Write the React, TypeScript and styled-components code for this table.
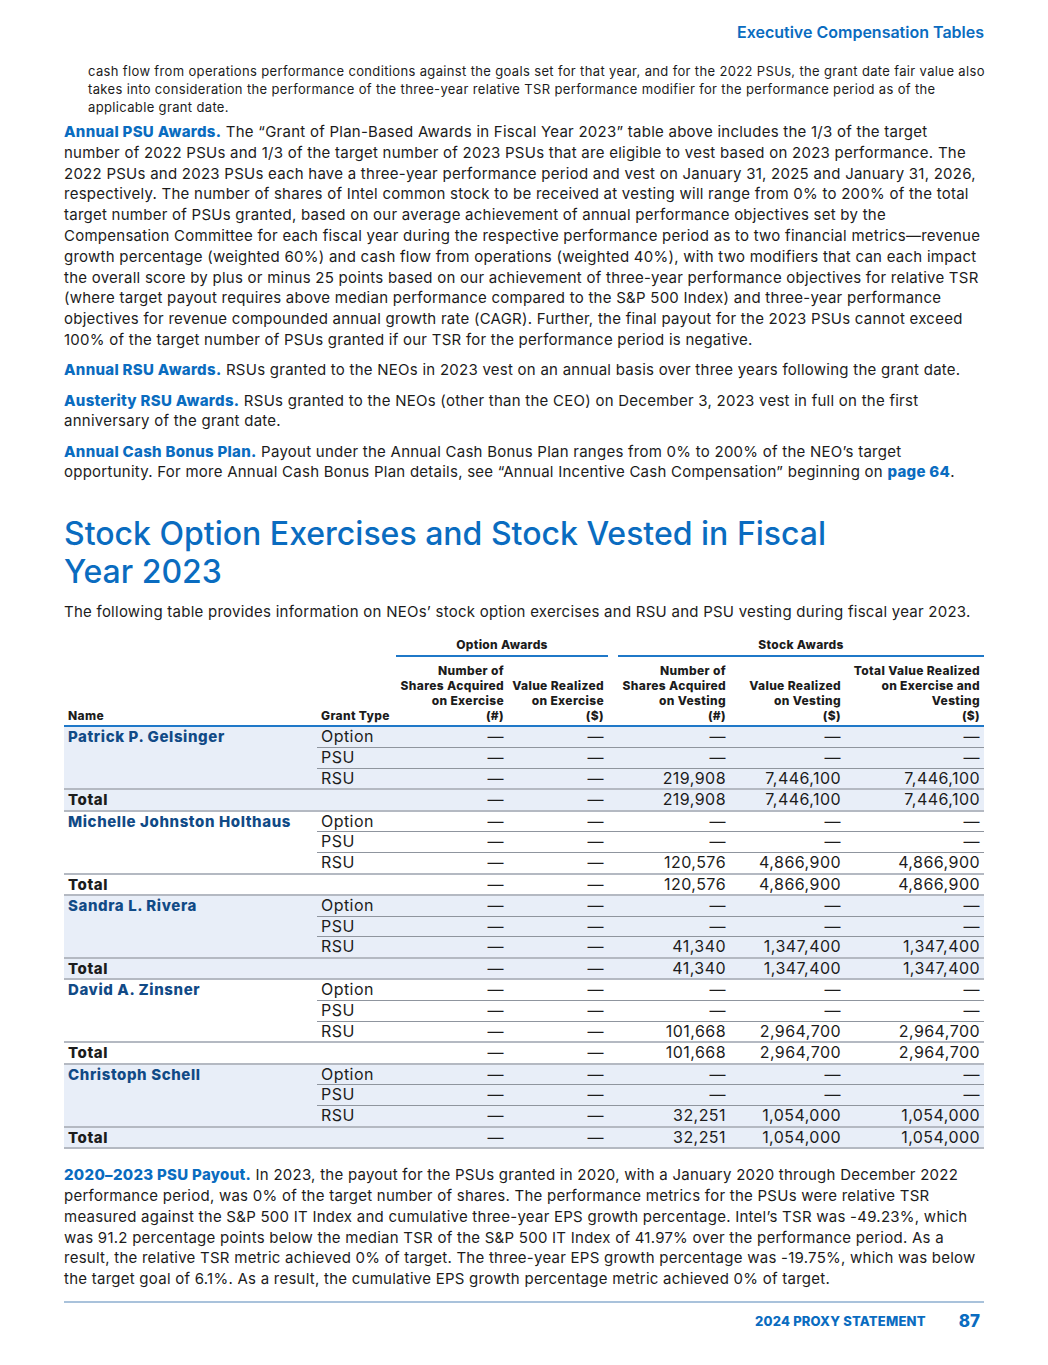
import React from "react";
import styled, { createGlobalStyle } from "styled-components";

const GlobalStyle = createGlobalStyle`
  html, body { margin: 0; padding: 0; background: #ffffff; }
  body { font-family: Inter, "Open Sans", "Liberation Sans", sans-serif; color: #1c1c1c; }
`;

const Page = styled.div`
  width: 1048px;
  height: 1365px;
  box-sizing: border-box;
  padding: 0 64px;
  display: flex;
  flex-direction: column;
`;

const RunningHead = styled.div`
  padding-top: 22px;
  height: 20px;
  line-height: 20px;
  text-align: right;
  font-size: 16px;
  font-weight: 600;
  color: #0a6cc0;
`;

const Para = styled.div<{ $mt: number; $small?: boolean; $indent?: number }>`
  margin-top: ${(p) => p.$mt}px;
  padding-left: ${(p) => p.$indent ?? 0}px;
  font-size: ${(p) => (p.$small ? 13 : 15)}px;
  line-height: ${(p) => (p.$small ? 18 : 20.8)}px;
  letter-spacing: ${(p) => (p.$small ? "0.35px" : "0.25px")};
  white-space: nowrap;
`;

const Line = styled.span`
  display: block;
`;

const Label = styled.span`
  font-weight: 800;
  letter-spacing: 0.3px;
  color: #0a6cc0;
`;

const Title = styled.h1`
  margin: 32px 0 0;
  font-size: 32px;
  line-height: 38px;
  font-weight: 500;
  color: #0a6cc0;
  letter-spacing: 0px;
`;

const Table = styled.table`
  margin-top: 10px;
  width: 920px;
  border-collapse: collapse;
  table-layout: fixed;
`;

const GroupHead = styled.th`
  padding: 0;
  vertical-align: bottom;
`;

const GroupLabel = styled.div<{ $offset?: number }>`
  margin-left: ${(p) => p.$offset ?? 0}px;
  padding: 4px 0 3px;
  border-bottom: 2px solid #1f78c8;
  font-size: 12px;
  line-height: 15px;
  font-weight: 800;
  letter-spacing: 0.3px;
  text-align: center;
  color: #1c1c1c;
`;

const ColHead = styled.th<{ $left?: boolean }>`
  padding: 6px 4px 2px;
  vertical-align: bottom;
  font-size: 12px;
  line-height: 15.2px;
  font-weight: 800;
  letter-spacing: 0.35px;
  text-align: ${(p) => (p.$left ? "left" : "right")};
  border-bottom: 2px solid #1f78c8;
  color: #1c1c1c;
  white-space: nowrap;
`;

const Row = styled.tr<{ $shaded: boolean }>`
  background: ${(p) => (p.$shaded ? "#e8eef8" : "#ffffff")};
`;

const Cell = styled.td<{ $left?: boolean; $edge?: "thin" | "thick" }>`
  padding: 0 4px;
  height: 19.6px;
  font-size: 16px;
  line-height: 19.6px;
  letter-spacing: 0.45px;
  text-align: ${(p) => (p.$left ? "left" : "right")};
  white-space: nowrap;
  border-bottom: ${(p) =>
    p.$edge === "thick" ? "2px solid #b4b9c2" : "1px solid #8f959e"};
`;

const NameCell = styled.td`
  padding: 0 4px;
  vertical-align: top;
  font-size: 15px;
  line-height: 19.6px;
  font-weight: 800;
  letter-spacing: 0.6px;
  white-space: nowrap;
  color: #114a86;
  border-bottom: 2px solid #b4b9c2;
`;

const TotalCell = styled.td<{ $left?: boolean }>`
  padding: 0 4px;
  height: 19.6px;
  font-size: ${(p) => (p.$left ? 15 : 16)}px;
  line-height: 19.6px;
  letter-spacing: ${(p) => (p.$left ? "0.6px" : "0.45px")};
  font-weight: ${(p) => (p.$left ? 800 : 400)};
  text-align: ${(p) => (p.$left ? "left" : "right")};
  border-bottom: 2px solid #b4b9c2;
`;

const Footer = styled.div`
  margin-top: 11px;
  border-top: 2px solid #a9c2db;
  display: flex;
  justify-content: flex-end;
  align-items: center;
  gap: 33px;
  padding: 8px 4px 0 0;
  color: #0a6cc0;
  font-weight: 800;
`;

const FooterTitle = styled.span`
  font-size: 13px;
  letter-spacing: 0.2px;
`;

const PageNum = styled.span`
  font-size: 17px;
`;

type Person = { name: string; shares: string; value: string };

const people: Person[] = [
  { name: "Patrick P. Gelsinger", shares: "219,908", value: "7,446,100" },
  { name: "Michelle Johnston Holthaus", shares: "120,576", value: "4,866,900" },
  { name: "Sandra L. Rivera", shares: "41,340", value: "1,347,400" },
  { name: "David A. Zinsner", shares: "101,668", value: "2,964,700" },
  { name: "Christoph Schell", shares: "32,251", value: "1,054,000" },
];

const D = "\u2014";

function PersonRows({ p, shaded }: { p: Person; shaded: boolean }) {
  return (
    <>
      <Row $shaded={shaded}>
        <NameCell rowSpan={3}>{p.name}</NameCell>
        <Cell $left>Option</Cell>
        <Cell>{D}</Cell>
        <Cell>{D}</Cell>
        <Cell>{D}</Cell>
        <Cell>{D}</Cell>
        <Cell>{D}</Cell>
      </Row>
      <Row $shaded={shaded}>
        <Cell $left>PSU</Cell>
        <Cell>{D}</Cell>
        <Cell>{D}</Cell>
        <Cell>{D}</Cell>
        <Cell>{D}</Cell>
        <Cell>{D}</Cell>
      </Row>
      <Row $shaded={shaded}>
        <Cell $left $edge="thick">RSU</Cell>
        <Cell $edge="thick">{D}</Cell>
        <Cell $edge="thick">{D}</Cell>
        <Cell $edge="thick">{p.shares}</Cell>
        <Cell $edge="thick">{p.value}</Cell>
        <Cell $edge="thick">{p.value}</Cell>
      </Row>
      <Row $shaded={shaded}>
        <TotalCell $left colSpan={2}>Total</TotalCell>
        <TotalCell>{D}</TotalCell>
        <TotalCell>{D}</TotalCell>
        <TotalCell>{p.shares}</TotalCell>
        <TotalCell>{p.value}</TotalCell>
        <TotalCell>{p.value}</TotalCell>
      </Row>
    </>
  );
}

export default function App() {
  return (
    <>
      <GlobalStyle />
      <Page>
        <RunningHead>Executive Compensation Tables</RunningHead>

        <Para $mt={20} $small $indent={24}>
          <Line>cash flow from operations performance conditions against the goals set for that year, and for the 2022 PSUs, the grant date fair value also</Line>
          <Line>takes into consideration the performance of the three-year relative TSR performance modifier for the performance period as of the</Line>
          <Line>applicable grant date.</Line>
        </Para>

        <Para $mt={6}>
          <Line><Label>Annual PSU Awards.</Label> The “Grant of Plan-Based Awards in Fiscal Year 2023” table above includes the 1/3 of the target</Line>
          <Line>number of 2022 PSUs and 1/3 of the target number of 2023 PSUs that are eligible to vest based on 2023 performance. The</Line>
          <Line>2022 PSUs and 2023 PSUs each have a three-year performance period and vest on January 31, 2025 and January 31, 2026,</Line>
          <Line>respectively. The number of shares of Intel common stock to be received at vesting will range from 0% to 200% of the total</Line>
          <Line>target number of PSUs granted, based on our average achievement of annual performance objectives set by the</Line>
          <Line>Compensation Committee for each fiscal year during the respective performance period as to two financial metrics—revenue</Line>
          <Line>growth percentage (weighted 60%) and cash flow from operations (weighted 40%), with two modifiers that can each impact</Line>
          <Line>the overall score by plus or minus 25 points based on our achievement of three-year performance objectives for relative TSR</Line>
          <Line>(where target payout requires above median performance compared to the S&amp;P 500 Index) and three-year performance</Line>
          <Line>objectives for revenue compounded annual growth rate (CAGR). Further, the final payout for the 2023 PSUs cannot exceed</Line>
          <Line>100% of the target number of PSUs granted if our TSR for the performance period is negative.</Line>
        </Para>

        <Para $mt={9}>
          <Line><Label>Annual RSU Awards.</Label> RSUs granted to the NEOs in 2023 vest on an annual basis over three years following the grant date.</Line>
        </Para>

        <Para $mt={10}>
          <Line><Label>Austerity RSU Awards.</Label> RSUs granted to the NEOs (other than the CEO) on December 3, 2023 vest in full on the first</Line>
          <Line>anniversary of the grant date.</Line>
        </Para>

        <Para $mt={9.5}>
          <Line><Label>Annual Cash Bonus Plan.</Label> Payout under the Annual Cash Bonus Plan ranges from 0% to 200% of the NEO’s target</Line>
          <Line>opportunity. For more Annual Cash Bonus Plan details, see “Annual Incentive Cash Compensation” beginning on <Label>page 64</Label>.</Line>
        </Para>

        <Title>
          Stock Option Exercises and Stock Vested in Fiscal
          <br />
          Year 2023
        </Title>

        <Para $mt={10.5}>
          <Line>The following table provides information on NEOs’ stock option exercises and RSU and PSU vesting during fiscal year 2023.</Line>
        </Para>

        <Table>
          <colgroup>
            <col style={{ width: 253 }} />
            <col style={{ width: 79 }} />
            <col style={{ width: 112 }} />
            <col style={{ width: 100 }} />
            <col style={{ width: 122 }} />
            <col style={{ width: 115 }} />
            <col style={{ width: 139 }} />
          </colgroup>
          <thead>
            <tr>
              <GroupHead colSpan={2} />
              <GroupHead colSpan={2}>
                <GroupLabel>Option Awards</GroupLabel>
              </GroupHead>
              <GroupHead colSpan={3}>
                <GroupLabel $offset={10}>Stock Awards</GroupLabel>
              </GroupHead>
            </tr>
            <tr>
              <ColHead $left>Name</ColHead>
              <ColHead $left>Grant Type</ColHead>
              <ColHead>
                Number of
                <br />
                Shares Acquired
                <br />
                on Exercise
                <br />
                (#)
              </ColHead>
              <ColHead>
                Value Realized
                <br />
                on Exercise
                <br />
                ($)
              </ColHead>
              <ColHead>
                Number of
                <br />
                Shares Acquired
                <br />
                on Vesting
                <br />
                (#)
              </ColHead>
              <ColHead>
                Value Realized
                <br />
                on Vesting
                <br />
                ($)
              </ColHead>
              <ColHead>
                Total Value Realized
                <br />
                on Exercise and
                <br />
                Vesting
                <br />
                ($)
              </ColHead>
            </tr>
          </thead>
          <tbody>
            {people.map((p, i) => (
              <PersonRows key={p.name} p={p} shaded={i % 2 === 0} />
            ))}
          </tbody>
        </Table>

        <Para $mt={16}>
          <Line><Label>2020–2023 PSU Payout.</Label> In 2023, the payout for the PSUs granted in 2020, with a January 2020 through December 2022</Line>
          <Line>performance period, was 0% of the target number of shares. The performance metrics for the PSUs were relative TSR</Line>
          <Line>measured against the S&amp;P 500 IT Index and cumulative three-year EPS growth percentage. Intel’s TSR was -49.23%, which</Line>
          <Line>was 91.2 percentage points below the median TSR of the S&amp;P 500 IT Index of 41.97% over the performance period. As a</Line>
          <Line>result, the relative TSR metric achieved 0% of target. The three-year EPS growth percentage was -19.75%, which was below</Line>
          <Line>the target goal of 6.1%. As a result, the cumulative EPS growth percentage metric achieved 0% of target.</Line>
        </Para>

        <Footer>
          <FooterTitle>2024 PROXY STATEMENT</FooterTitle>
          <PageNum>87</PageNum>
        </Footer>
      </Page>
    </>
  );
}
